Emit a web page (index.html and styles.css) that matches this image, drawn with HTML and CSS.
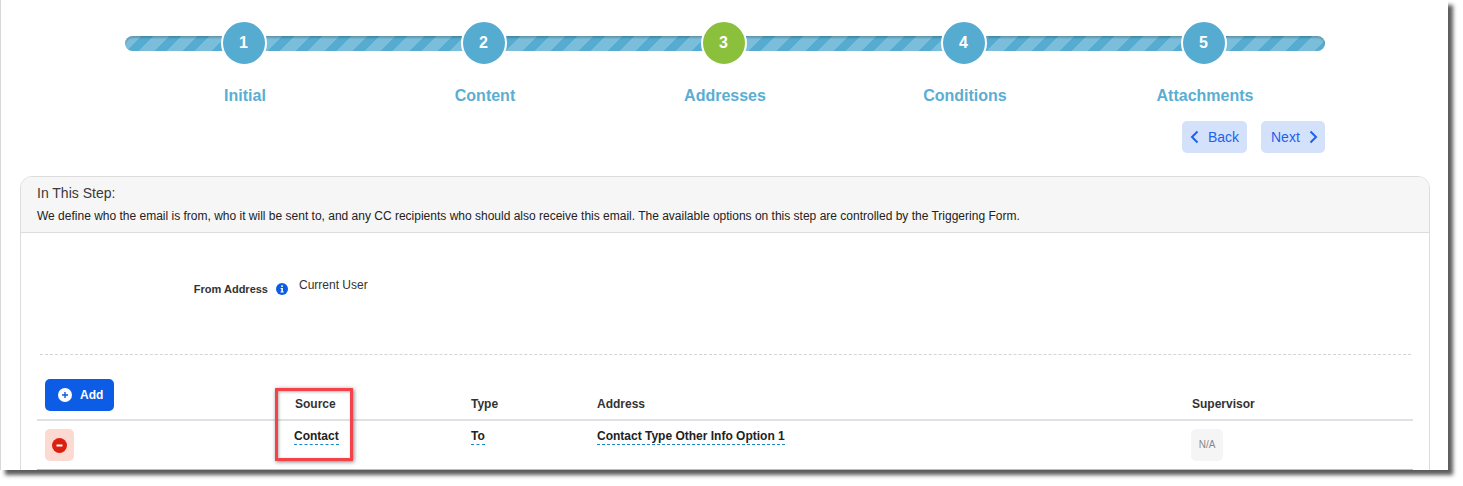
FILE: index.html
```html
<!DOCTYPE html>
<html lang="en">
<head>
<meta charset="utf-8">
<title>Addresses</title>
<link rel="stylesheet" href="styles.css">
</head>
<body>
<div class="page">
  <div class="stepper">
    <div class="bar"></div>
    <div class="step"><span class="dot">1</span><span class="label">Initial</span></div>
    <div class="step"><span class="dot">2</span><span class="label">Content</span></div>
    <div class="step"><span class="dot current">3</span><span class="label">Addresses</span></div>
    <div class="step"><span class="dot">4</span><span class="label">Conditions</span></div>
    <div class="step"><span class="dot">5</span><span class="label">Attachments</span></div>
  </div>
  <div class="nav">
    <button class="nav-btn back"><svg width="9" height="14" viewBox="0 0 9 14"><path d="M7.5 1.5 2 7l5.5 5.5" fill="none" stroke="currentColor" stroke-width="2"/></svg>Back</button>
    <button class="nav-btn next">Next<svg width="9" height="14" viewBox="0 0 9 14"><path d="M1.5 1.5 7 7l-5.5 5.5" fill="none" stroke="currentColor" stroke-width="2"/></svg></button>
  </div>
  <section class="card">
    <header class="card-head">
      <h2 class="card-title">In This Step:</h2>
      <p class="card-desc">We define who the email is from, who it will be sent to, and any CC recipients who should also receive this email. The available options on this step are controlled by the Triggering Form.</p>
    </header>
    <div class="card-body">
      <div class="from-row">
        <span class="from-label">From Address</span>
        <svg class="info" width="12" height="12" viewBox="0 0 12 12"><circle cx="6" cy="6" r="6" fill="#0d5ce6"/><rect x="5.2" y="2.3" width="1.7" height="1.6" fill="#fff"/><path d="M4.6 5h2.3v3.6h.8v1H4.5v-1h.8V6h-.7z" fill="#fff"/></svg>
        <span class="from-value">Current User</span>
      </div>
      <div class="divider"></div>
      <div class="table">
        <div class="row head">
          <div class="cell add-cell"><button class="add-btn"><svg width="14" height="14" viewBox="0 0 14 14"><circle cx="7" cy="7" r="7" fill="#fff"/><path d="M7 4v6M4 7h6" stroke="#0d5ce6" stroke-width="1.4"/></svg>Add</button></div>
          <div class="cell src">Source</div>
          <div class="cell">Type</div>
          <div class="cell">Address</div>
          <div class="cell">Supervisor</div>
        </div>
        <div class="row body-row">
          <div class="cell"><button class="remove-btn"><svg width="15" height="15" viewBox="0 0 15 15"><circle cx="7.5" cy="7.5" r="7.5" fill="#dc2010"/><path d="M4.5 7.5h6" stroke="#fff" stroke-width="2"/></svg></button></div>
          <div class="cell src"><span class="link">Contact</span></div>
          <div class="cell"><span class="link">To</span></div>
          <div class="cell"><span class="link">Contact Type Other Info Option 1</span></div>
          <div class="cell"><span class="na">N/A</span></div>
        </div>
      </div>
    </div>
  </section>
  <div class="highlight"></div>
</div>
</body>
</html>
```
FILE: styles.css
```css
* { box-sizing: border-box; }
html, body { margin: 0; background: #fff; }
body { font-family: "Liberation Sans", Arial, sans-serif; color: #222; height: 486px; overflow: hidden; }
.page {
  position: relative;
  width: 1448px;
  height: 470px;
  overflow: clip;
  overflow-clip-margin: 0;
  background: #fff;
  border-left: 1px solid #d8d8d8;
  padding: 22px 0 0 124px;
  box-shadow: 5px 5px 4px #5c5c5c;
}
.stepper { position: relative; display: grid; grid-template-columns: repeat(5, 240px); width: 1200px; }
.bar {
  position: absolute;
  left: 0; top: 14px;
  width: 1200px; height: 15px;
  border-radius: 8px;
  background-image: repeating-linear-gradient(135deg, #7bbedb 0 11.5px, #55acd0 11.5px 20px);
  box-shadow: inset 0 2px 2px rgba(0,0,0,.2);
}
.step { position: relative; display: flex; flex-direction: column; align-items: center; }
.dot {
  width: 46px; height: 46px;
  margin: -2px 0 0 -3px;
  border: 2px solid #fff;
  border-radius: 50%;
  background: #55acd0;
  color: #fff;
  font-size: 16px; font-weight: 700;
  display: flex; align-items: center; justify-content: center;
}
.dot.current { background: #8bc03c; }
.label { margin-top: 21px; font-size: 16px; line-height: 18px; font-weight: 700; color: #5aaed3; }
.nav { display: flex; justify-content: flex-end; gap: 14px; width: 1200px; margin-top: 16px; }
.nav-btn {
  height: 32px;
  border: 0; border-radius: 5px;
  background: #d4e1fb;
  color: #1e62ec;
  font: 14px "Liberation Sans", Arial, sans-serif;
  display: flex; align-items: center;
  padding: 0;
}
.back { width: 65px; gap: 9px; padding-left: 8px; }
.next { width: 64px; gap: 9px; padding-left: 10px; }
.card {
  width: 1410px;
  margin: 23px 0 0 -105px;
  border: 1px solid #dcdcdc;
  border-radius: 12px 12px 0 0;
}
.card-head {
  height: 56px;
  padding: 8px 16px 0;
  background: #f6f6f6;
  border-bottom: 1px solid #dcdcdc;
  border-radius: 11px 11px 0 0;
}
.card-title { margin: 0; font-size: 14px; line-height: 16px; font-weight: 400; color: #3a3a3a; }
.card-desc { margin: 8px 0 0; font-size: 12px; line-height: 14px; color: #222; }
.from-row { display: flex; align-items: flex-start; height: 121px; padding-top: 45px; }
.from-label { width: 247px; margin-top: 5px; text-align: right; font-size: 11px; line-height: 13px; font-weight: 700; color: #333; }
.info { margin: 5px 0 0 8px; flex: none; }
.from-value { margin-left: 11px; font-size: 12px; line-height: 14px; color: #333; }
.divider { width: 1371px; margin-left: 19px; border-top: 1px dashed #d4d4d4; }
.table { width: 1376px; margin: 24px 0 0 16px; }
.row { display: grid; grid-template-columns: 257px 177px 126px 595px 221px; }
.head { height: 42px; border-bottom: 2px solid #dee2e6; align-items: end; }
.head .cell { font-size: 12px; line-height: 14px; font-weight: 700; color: #333; padding-bottom: 9px; }
.head .src { padding-left: 1px; }
.head .add-cell { padding: 0 0 9px 8px; align-self: stretch; }
.add-btn {
  width: 69px; height: 32px;
  border: 0; border-radius: 5px;
  background: #0d5ce6;
  color: #fff;
  font: 700 12px "Liberation Sans", Arial, sans-serif;
  display: flex; align-items: center; gap: 8px;
  padding: 0 0 0 13px;
}
.body-row { height: 49px; border-bottom: 1px solid #bdbdbd; padding-top: 8px; }
.body-row .cell { font-size: 12px; line-height: 14px; font-weight: 700; color: #222; }
.body-row .cell:first-child { padding-left: 8px; }
.link { display: inline-block; border-bottom: 1px dashed #1a87c9; padding-bottom: 1px; }
.remove-btn {
  width: 29px; height: 32px;
  border: 0; border-radius: 5px;
  background: #fcdad2;
  display: flex; align-items: center; justify-content: center;
  padding: 0;
}
.na {
  display: flex; align-items: center; justify-content: center;
  width: 32px; height: 32px;
  margin-left: -1px;
  border-radius: 5px;
  background: #f5f5f5;
  font-size: 10px; font-weight: 400;
  color: #888;
}
.highlight {
  position: absolute;
  left: 274px; top: 388px;
  width: 78px; height: 73px;
  border: 3px solid #f4424a;
  box-shadow: 1px 1px 4px rgba(0,0,0,.5), inset 1px 1px 3px rgba(0,0,0,.3);
}
```
